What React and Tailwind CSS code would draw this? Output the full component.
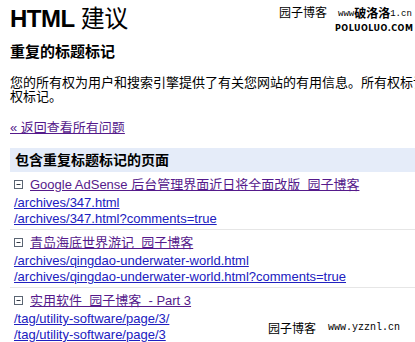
import React from "react";

const items = [
  {
    title: "Google AdSense 后台管理界面近日将全面改版  园子博客",
    links: ["/archives/347.html", "/archives/347.html?comments=true"],
  },
  {
    title: "青岛海底世界游记  园子博客",
    links: [
      "/archives/qingdao-underwater-world.html",
      "/archives/qingdao-underwater-world.html?comments=true",
    ],
  },
  {
    title: "实用软件  园子博客  - Part 3",
    links: ["/tag/utility-software/page/3/", "/tag/utility-software/page/3"],
  },
];

const Collapse = () => (
  <svg width="9" height="9" viewBox="0 0 9 9" className="shrink-0">
    <rect x="0.5" y="0.5" width="8" height="8" fill="white" stroke="#5a6472" />
    <path d="M2.5 4.5H6.5" stroke="#333a44" />
  </svg>
);

const PageItem = ({ item }) => (
  <div className="pt-[4px] pb-[3px] pl-[4px] border-b border-[#e6e6e6]">
    <div className="flex items-center h-[17px]">
      <Collapse />
      <a href="#" className="ml-[7px] whitespace-pre text-[#551a8b] underline text-[13px] leading-[17px]">
        {item.title}
      </a>
    </div>
    {item.links.map((l, i) => (
      <div key={l} className={i === 0 ? "h-[17px] leading-[17px]" : "h-[16px] leading-[16px]"}>
        <a href="#" className="text-[#2020c0] underline text-[13px] whitespace-nowrap">
          {l}
        </a>
      </div>
    ))}
  </div>
);

export default function App() {
  return (
    <div className="relative w-[415px] h-[342px] overflow-hidden bg-white text-black font-['Liberation_Sans','Noto_Sans_CJK_SC',sans-serif]">
      <div className="pl-[10px] pt-[5px] w-[600px]">
        <h1 className="text-[24px] leading-[28px] tracking-[-0.5px]">
          <span className="font-bold">HTML</span> 建议
        </h1>
        <h2 className="mt-[9px] text-[15px] leading-[20px] font-bold">重复的标题标记</h2>
        <p className="mt-[14px] text-[13px] leading-[14px] whitespace-nowrap">
          您的所有权为用户和搜索引擎提供了有关您网站的有用信息。所有权标记应该是唯一的
          <br />
          权标记。
        </p>
        <div className="mt-[16px] text-[13px] leading-[16px]">
          <a href="#" className="text-[#551a8b] underline">
            « 返回查看所有问题
          </a>
        </div>
        <div className="mt-[12px] h-[24px] bg-[#e5ecf9] flex items-center pl-[5px] text-[14px] font-bold">
          包含重复标题标记的页面
        </div>
        {items.map((it) => (
          <PageItem key={it.title} item={it} />
        ))}
      </div>

      <div className="absolute left-[279px] top-[5px] whitespace-nowrap text-[12px] leading-[14px] font-['Noto_Sans_CJK_SC',sans-serif]">
        园子博客
      </div>
      <div className="absolute left-[338px] top-[7px] flex items-end whitespace-nowrap leading-none">
        <span className="text-[9px] font-['Liberation_Mono',monospace]">www</span>
        <span className="text-[12px] font-bold font-['Noto_Sans_CJK_SC',sans-serif]">破洛洛</span>
        <span className="text-[9px] font-['Liberation_Mono',monospace]">1.cn</span>
      </div>
      <div className="absolute left-[335px] top-[25px] whitespace-nowrap text-[8px] leading-[8px] font-bold tracking-[0.5px] font-['DejaVu_Sans',sans-serif]">
        POLUOLUO.COM
      </div>

      <div className="absolute left-[268px] top-[320px] flex items-center gap-[12px] whitespace-nowrap">
        <span className="text-[12px] leading-[16px] font-['Noto_Sans_CJK_SC',sans-serif]">园子博客</span>
        <span className="text-[10px] leading-[16px] font-['Liberation_Mono',monospace]">www.yzznl.cn</span>
      </div>
    </div>
  );
}
